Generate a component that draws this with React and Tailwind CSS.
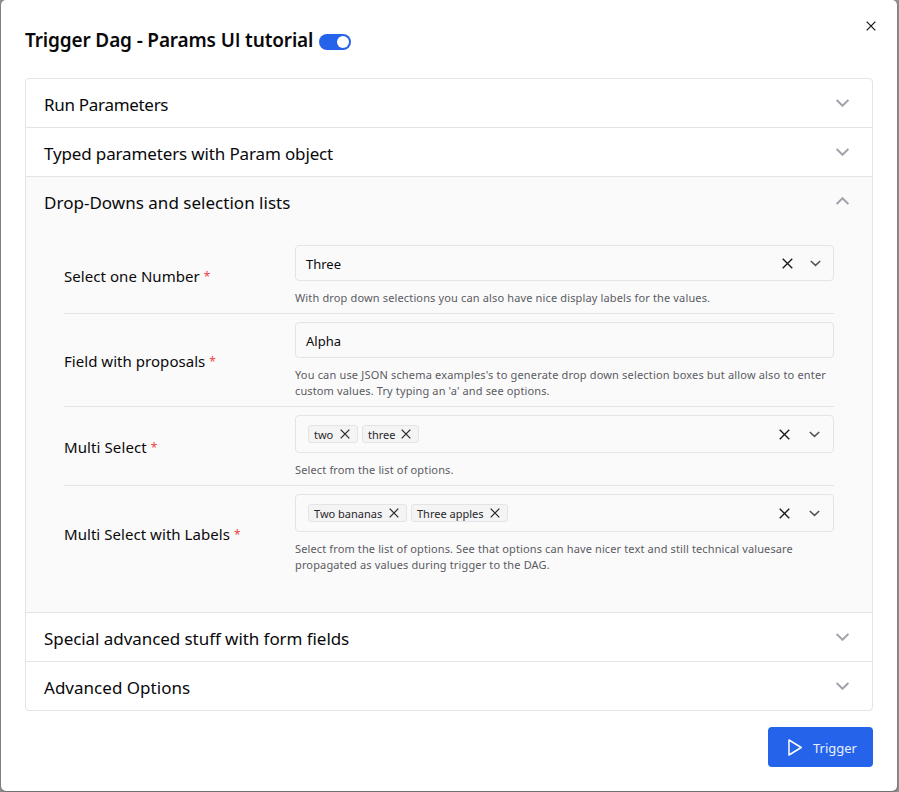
import React from "react";

function Cross({ className }) {
  return (
    <svg className={className} viewBox="0 0 12 12" fill="none" stroke="currentColor" strokeWidth="1.5" strokeLinecap="butt">
      <path d="M.8 .8 11.2 11.2M11.2 .8 .8 11.2" />
    </svg>
  );
}

function SmallChevron() {
  return (
    <svg className="h-[7px] w-[11px] text-[#52525b]" viewBox="0 0 11 7" fill="none" stroke="currentColor" strokeWidth="1.5">
      <path d="M.8 1 5.5 5.4 10.2 1" />
    </svg>
  );
}

function Header({ title, spacing, open }) {
  return (
    <div className="flex h-12 shrink-0 items-center justify-between pr-[23px] pl-[18px]">
      <span className={`relative top-[2px] text-[17px] leading-6 whitespace-nowrap ${spacing}`}>{title}</span>
      <svg className="h-2 w-[13px] text-[#a1a1aa]" viewBox="0 0 13 8" fill="none" stroke="currentColor" strokeWidth="1.9">
        <path d={open ? "M.6 7 6.5 1.2 12.4 7" : "M.6 1 6.5 6.8 12.4 1"} />
      </svg>
    </div>
  );
}

function Row({ label, spacing, last, lines, children }) {
  return (
    <div className={`flex items-center pt-2 pb-[7px] ${last ? "" : "border-b border-[#e4e4e7]"}`}>
      <div className="flex w-[231px] shrink-0 pt-px text-[15px] leading-6 whitespace-nowrap">
        <span className={spacing}>{label}</span>
        <span className="ml-1 text-[12px] leading-[25px] text-[#ef4444]">*</span>
      </div>
      <div className="flex w-[539px] flex-col gap-[9px]">
        {children}
        <div className="text-[11px] leading-4 whitespace-nowrap text-[#5a5a63]">
          {lines.map(([text, ls]) => (
            <div key={text} className={ls}>{text}</div>
          ))}
        </div>
      </div>
    </div>
  );
}

function Tag({ text, width }) {
  return (
    <div className={`flex h-[18px] items-center justify-between rounded-[3px] border border-[#e4e4e7] bg-[#f4f4f5] pr-[7px] pl-[5px] text-[#27272a] ${width}`}>
      <span className="pt-px text-[11px] leading-4 whitespace-nowrap">{text}</span>
      <Cross className="h-[10px] w-[10px]" />
    </div>
  );
}

function MultiBox({ children }) {
  return (
    <div className="flex h-[38px] items-center rounded-[4px] border border-[#e4e4e7] pr-[13px] pl-3">
      <div className="flex flex-1 gap-1">{children}</div>
      <Cross className="mr-[19px] h-[11px] w-[11px] text-[#18181b]" />
      <SmallChevron />
    </div>
  );
}

export default function App() {
  return (
    <div className="h-[792px] w-[899px] overflow-hidden bg-[#919191] pr-[2px] pb-px pl-px font-['Noto_Sans',sans-serif] text-[#09090b]">
      <div className="relative flex h-full flex-col rounded-[5px] bg-white px-6 shadow-[0_1px_3px_#0005]">
        <Cross className="absolute top-[21px] right-[21px] h-[10px] w-[10px] text-[#18181b]" />
        <div className="flex h-[78px] items-center gap-[6px]">
          <h1 className="w-[288px] pt-[2px] text-[19px] leading-7 font-semibold tracking-[-0.15px] whitespace-nowrap">
            Trigger Dag - Params U<span className="font-['Open_Sans']">I</span> tutorial
          </h1>
          <div className="mt-[6px] flex h-4 w-8 items-center justify-end rounded-full bg-[#2563eb] pr-[2px]">
            <div className="h-3 w-3 rounded-full bg-white" />
          </div>
        </div>
        <div className="flex h-[633px] w-[848px] shrink-0 flex-col divide-y divide-[#e4e4e7] overflow-hidden rounded-[4px] border border-[#e4e4e7]">
          <div><Header title="Run Parameters" spacing="tracking-[-0.3px]" /></div>
          <div><Header title="Typed parameters with Param object" spacing="tracking-[-0.14px]" /></div>
          <div className="h-[436px] shrink-0 bg-[#fafafa]">
            <Header title="Drop-Downs and selection lists" spacing="tracking-[0.02px]" open />
            <div className="mt-3 px-[38px]">
              <Row label="Select one Number" spacing="tracking-[0.06px]" lines={[["With drop down selections you can also have nice display labels for the values.", "tracking-[0.145px]"]]}>
                <div className="flex h-9 items-center rounded-[4px] border border-[#e4e4e7] pr-3 pl-[10px]">
                  <span className="flex-1 pt-[2px] text-[13px] leading-5">Three</span>
                  <Cross className="mr-[17px] h-[11px] w-[11px] text-[#18181b]" />
                  <SmallChevron />
                </div>
              </Row>
              <Row label="Field with proposals" spacing="tracking-[0.04px]" lines={[["You can use JSON schema examples's to generate drop down selection boxes but allow also to enter", "tracking-[0.17px]"], ["custom values. Try typing an 'a' and see options.", "tracking-[0.13px]"]]}>
                <div className="flex h-9 items-center rounded-[4px] border border-[#e4e4e7] pl-[10px]">
                  <span className="pt-[2px] text-[13px] leading-5">Alpha</span>
                </div>
              </Row>
              <Row label="Multi Select" spacing="tracking-[0.1px]" lines={[["Select from the list of options.", "tracking-[0.14px]"]]}>
                <MultiBox>
                  <Tag text="two" width="w-[50px]" />
                  <Tag text="three" width="w-[57px]" />
                </MultiBox>
              </Row>
              <Row label="Multi Select with Labels" spacing="tracking-[0.05px]" last lines={[["Select from the list of options. See that options can have nicer text and still technical valuesare", "tracking-[0.125px]"], ["propagated as values during trigger to the DAG.", "tracking-[0.14px]"]]}>
                <MultiBox>
                  <Tag text="Two bananas" width="w-[99px]" />
                  <Tag text="Three apples" width="w-[97px]" />
                </MultiBox>
              </Row>
            </div>
          </div>
          <div><Header title="Special advanced stuff with form fields" spacing="tracking-[-0.06px]" /></div>
          <div><Header title="Advanced Options" spacing="tracking-[0.02px]" /></div>
        </div>
        <button className="mt-4 flex h-10 w-[105px] items-center self-end rounded-[4px] bg-[#2563eb] pl-5 text-white">
          <svg className="h-[17px] w-[15px]" viewBox="0 0 15 17" fill="none" stroke="currentColor" strokeWidth="1.5" strokeLinejoin="round">
            <path d="M1 1 13.2 8.5 1 16Z" />
          </svg>
          <span className="ml-[10px] pt-[2px] text-[13px] leading-5 text-white/90">Trigger</span>
        </button>
      </div>
    </div>
  );
}
